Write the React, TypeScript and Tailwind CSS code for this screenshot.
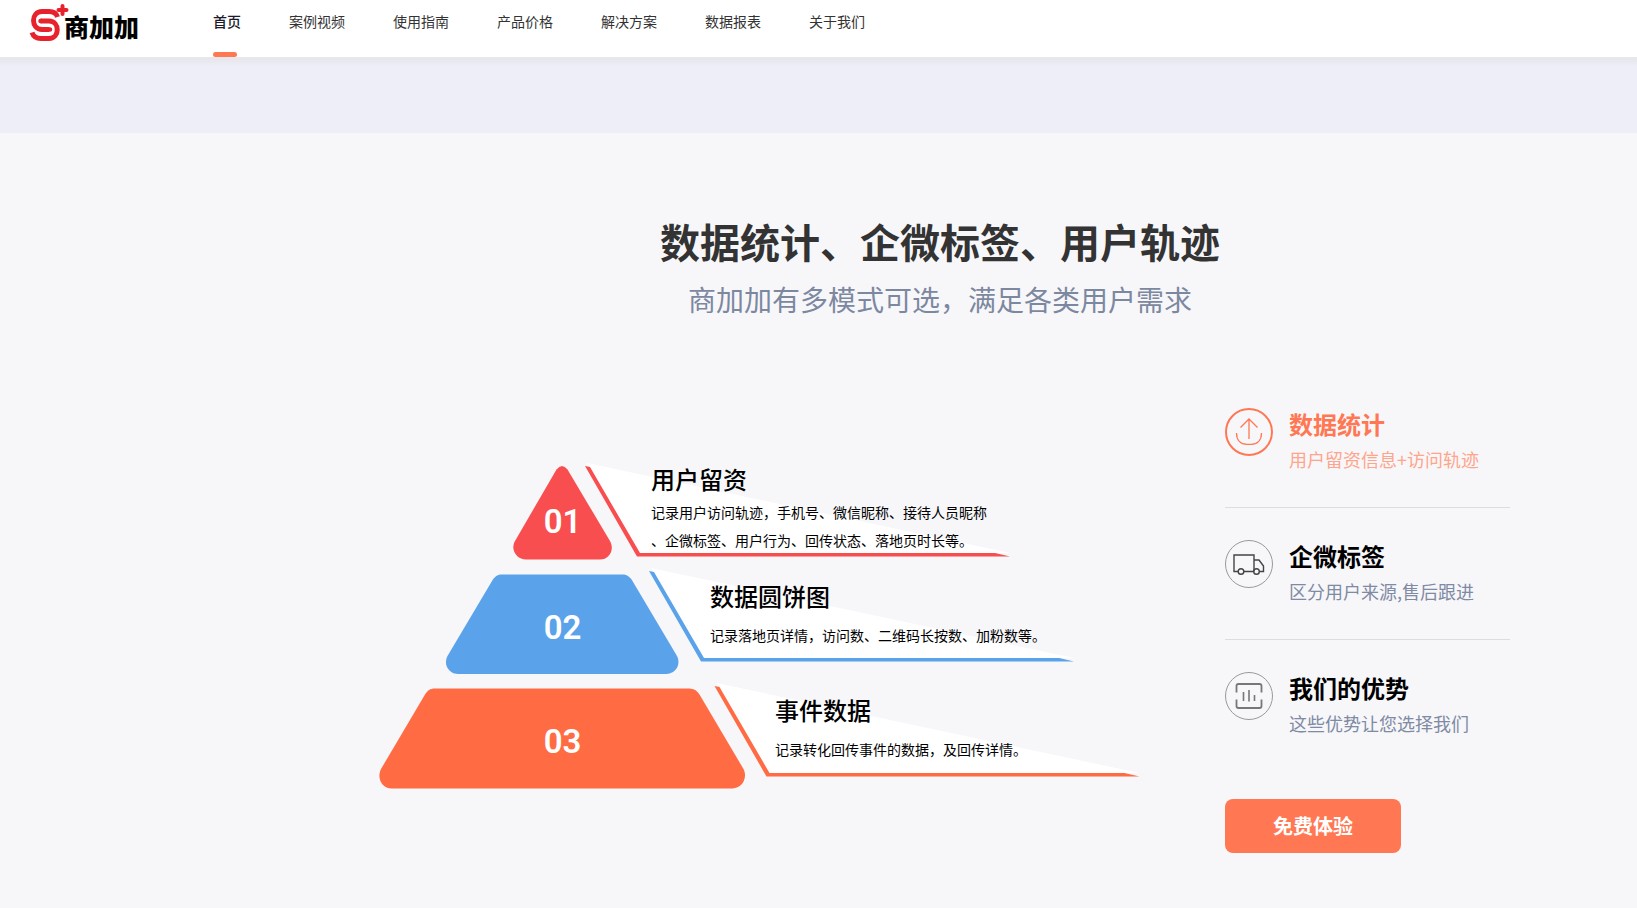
import type { ReactNode } from "react";
import clsx from "clsx";

const navItems = ["首页", "案例视频", "使用指南", "产品价格", "解决方案", "数据报表", "关于我们"];

const levels = [
    {
        no: "01",
        title: "用户留资",
        lines: ["记录用户访问轨迹，手机号、微信昵称、接待人员昵称", "、企微标签、用户行为、回传状态、落地页时长等。"],
        row: "h-24",
        number: "pt-[18px]",
        text: "pl-[88px]",
        gap: "mt-1",
    },
    {
        no: "02",
        title: "数据圆饼图",
        lines: ["记录落地页详情，访问数、二维码长按数、加粉数等。"],
        row: "h-[99px]",
        number: "pt-1.5",
        text: "pl-[147px] pt-1.5",
        gap: "mt-2.5",
    },
    {
        no: "03",
        title: "事件数据",
        lines: ["记录转化回传事件的数据，及回传详情。"],
        row: "h-[99px]",
        number: "pt-1.5",
        text: "pl-[212px] pt-1.5",
        gap: "mt-2.5",
    },
];

const Logo = () => (
    <a href="#" className="flex items-start text-black">
        <svg viewBox="0 0 42 42" className="h-[42px] w-[42px]" fill="none" stroke="#e8222d" strokeWidth="5">
            <path d="M29.500 17C28.500 13.500 25 11.500 21 11.500H14C2.700 11.500 2.700 29.500 14 29.500H21" />
            <path d="M12.500 21H21C32 21 32 38.500 21 38.500H13C9 38.500 5.500 37 4 32.500" />
            <path d="M12.500 21h1M21 29.500h1" strokeWidth="4.500" strokeLinecap="round" />
            <path d="M34.500 6v8M30.500 10h8" strokeWidth="4" strokeLinecap="round" />
        </svg>
        <span className="-ml-1.5 pt-3.5 text-[25px] leading-6 font-black">商加加</span>
    </a>
);

const Header = () => (
    <header className="relative flex h-[57px] bg-white pl-7 shadow-[0_2px_4px_4px_rgba(220,220,220,0.4)]">
        <Logo />
        <nav className="ml-[74px] flex gap-12">
            {navItems.map((item, i) => (
                <a
                    key={item}
                    href="#"
                    className={clsx(
                        "flex flex-col justify-between pt-[11px] text-sm",
                        i === 0 ? "font-medium text-[#1a1a2a]" : "text-[#333]"
                    )}
                >
                    {item}
                    {/* 選択中のメニューだけ下線を付ける */}
                    {i === 0 && <span className="h-[5px] w-6 rounded-full bg-[#ff7753]" />}
                </a>
            ))}
        </nav>
    </header>
);

/* 吹き出し。3つとも同じ形で色と位置だけ違う */
const Callout = ({ x, y, color }: { x: number; y: number; color: string }) => (
    <g transform={`translate(${x} ${y})`}>
        <path d="M208 -1L631 89H260Z" fill="#fff" />
        <path d="M206 2L211 3L261 89H616L631 92.500H258Z" fill={color} />
    </g>
);

const PyramidShapes = () => (
    <svg viewBox="0 0 760 325" className="absolute top-0 left-0 h-[325px] w-[760px] overflow-visible" aria-hidden="true">
        <path
            d="M177.500 5.500Q183 -1.500 188.500 5.500L231 77C236 86 230 95.500 221 95.500H147C138 95.500 131 86 136 77Z"
            fill="#f94e4f"
        />
        <path
            d="M122.500 110.500H244C248 110.500 251 113 253.500 117L298 192C302.500 201 296 210 287 210H79.500C70 210 64 201 68.500 192L113 117C115.500 113 118 110.500 122.500 110.500Z"
            fill="#5aa2ea"
        />
        <path
            d="M56 224.500H310.500C315 224.500 318 226.500 320.500 230.500L364.500 305C369 314 363 324.500 353.500 324.500H12.500C3 324.500 -2.500 314 2 305L46 230.500C48.500 226.500 51 224.500 56 224.500Z"
            fill="#ff6c43"
        />
        <Callout x={0} y={0} color="#f94e4f" />
        <Callout x={64} y={105} color="#5aa2ea" />
        <Callout x={129.5} y={220} color="#ff6c43" />
    </svg>
);

const Pyramid = () => (
    <div className="relative flex w-[760px] flex-col gap-[15px]">
        <PyramidShapes />
        {levels.map((level) => (
            <div key={level.no} className={clsx("relative flex", level.row)}>
                <div
                    className={clsx(
                        "flex w-[367px] shrink-0 items-center justify-center font-['Roboto',sans-serif] text-[33px] leading-none font-semibold text-white",
                        level.number
                    )}
                >
                    {level.no}
                </div>
                <div className={clsx("-ml-[183px] whitespace-nowrap text-black", level.text)}>
                    <h3 className="text-2xl leading-[30px] font-medium">{level.title}</h3>
                    <div className={clsx("text-sm leading-7", level.gap)}>
                        {level.lines.map((line) => (
                            <p key={line}>{line}</p>
                        ))}
                    </div>
                </div>
            </div>
        ))}
    </div>
);

const UploadIcon = () => (
    <svg viewBox="0 0 48 48" className="h-12 w-12 shrink-0" fill="none" stroke="#ff7753">
        <circle cx="24" cy="24" r="23" strokeWidth="2" />
        <path d="M24 31V11.500M15.500 19.500l8.500-8.500 8.500 8.500" strokeWidth="1.300" />
        <path d="M11.500 25C11.500 32 15.500 36.300 22 36.300H26C32.500 36.300 36.500 32 36.500 25" strokeWidth="1.300" />
    </svg>
);

const TruckIcon = () => (
    <svg viewBox="0 0 48 48" className="h-12 w-12 shrink-0" fill="none" stroke="#444">
        <circle cx="24" cy="24" r="23.500" stroke="#999" />
        <path d="M13 31.500H9V15H29V31.500M19 31.500H28.500M29 20H34L38.500 26V31.500H34.500" strokeWidth="1.400" />
        <circle cx="16" cy="31.500" r="2.800" strokeWidth="1.400" />
        <circle cx="31.500" cy="31.500" r="2.800" strokeWidth="1.400" />
    </svg>
);

const ChartIcon = () => (
    <svg viewBox="0 0 48 48" className="h-12 w-12 shrink-0" fill="none" stroke="#777">
        <circle cx="24" cy="24" r="23.500" stroke="#999" />
        <path
            d="M11.500 20.500V14Q11.500 12 13.500 12H34.500Q36.500 12 36.500 14V20.500M11.500 27.500V34Q11.500 36 13.500 36H34.500Q36.500 36 36.500 34V27.500"
            strokeWidth="1.800"
        />
        <path d="M18.500 20V29M24 18V29.500M29.500 23V29" strokeWidth="1.600" />
    </svg>
);

type FeatureProps = {
    icon: ReactNode;
    title: string;
    text: string;
    active?: boolean;
    last?: boolean;
};

const Feature = ({ icon, title, text, active, last }: FeatureProps) => (
    <li className={clsx(!last && "mb-8 border-b border-[#dcdde0]")}>
        <button type="button" className="flex w-full gap-4 pb-[34px] text-left">
            {icon}
            <span className="block">
                <span className={clsx("block text-2xl font-bold", active ? "text-[#ff7753]" : "text-black")}>
                    {title}
                </span>
                <span
                    className={clsx(
                        "mt-[5px] block text-lg leading-7 whitespace-nowrap",
                        active ? "text-[#ffa58c]" : "text-[#7f8aa3]"
                    )}
                >
                    {text}
                </span>
            </span>
        </button>
    </li>
);

export default function App() {
    return (
        <div className="min-h-screen bg-[#f7f7fa] font-['Noto_Sans_CJK_SC',sans-serif]">
            <Header />
            <div className="h-[76px] bg-[#eeeef8]" />

            <main className="pr-[127px] pl-[370px]">
                <div className="pt-[78px] text-center">
                    <h1 className="text-[40px] leading-[60px] font-bold text-[#333]">数据统计、企微标签、用户轨迹</h1>
                    <p className="mt-[7px] text-[28px] leading-[42px] text-[#7c88a0]">
                        商加加有多模式可选，满足各类用户需求
                    </p>
                </div>

                <div className="mt-22 flex justify-between">
                    <div className="pt-14 pl-[9px]">
                        <Pyramid />
                    </div>
                    <div className="w-[285px] shrink-0">
                        <ul>
                            <Feature icon={<UploadIcon />} title="数据统计" text="用户留资信息+访问轨迹" active />
                            <Feature icon={<TruckIcon />} title="企微标签" text="区分用户来源,售后跟进" />
                            <Feature icon={<ChartIcon />} title="我们的优势" text="这些优势让您选择我们" last />
                        </ul>
                        <button
                            type="button"
                            className="mt-7 h-[54px] w-44 rounded-lg bg-[#ff7753] text-xl font-bold text-white"
                        >
                            免费体验
                        </button>
                    </div>
                </div>
            </main>
        </div>
    );
}
